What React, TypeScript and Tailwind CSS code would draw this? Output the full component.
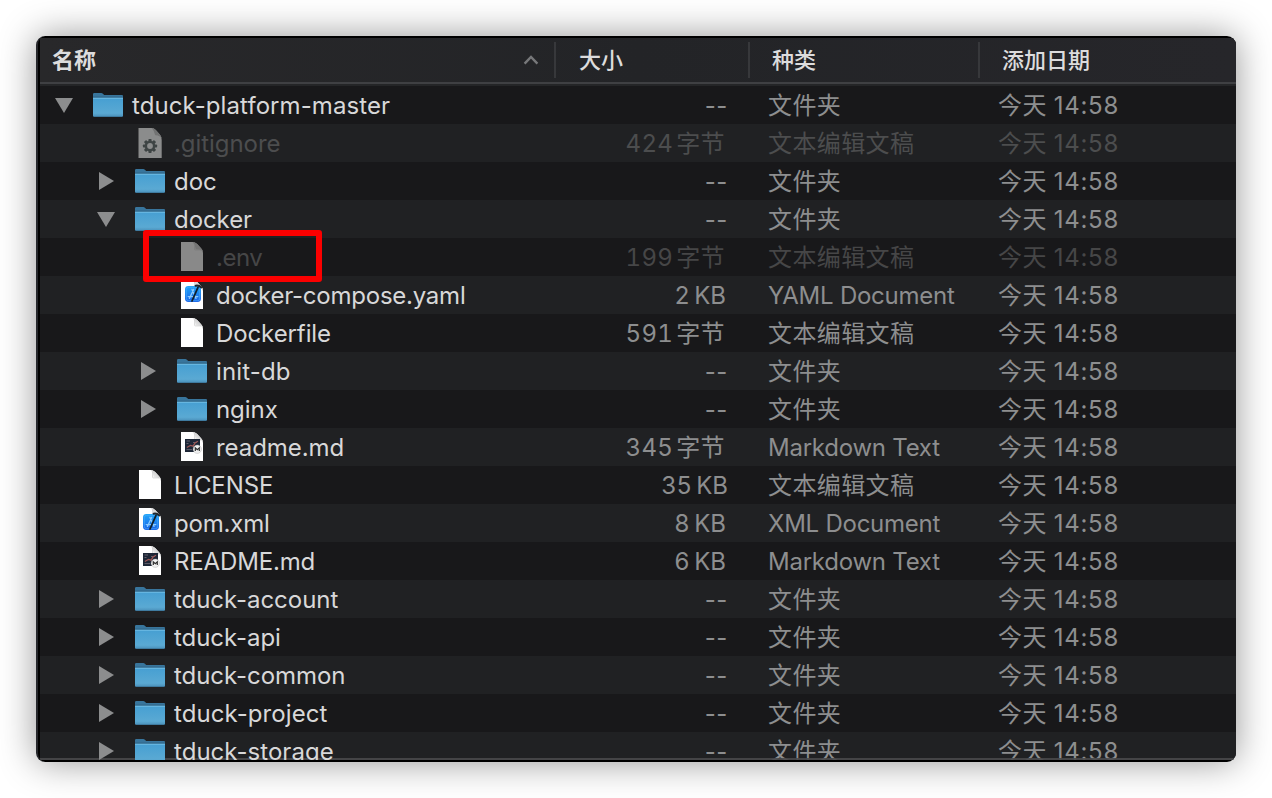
type IconKind = 'folder' | 'plain' | 'gear' | 'xcode' | 'markdown';

interface Entry {
  name: string;
  depth: number;
  icon: IconKind;
  open?: boolean;
  size?: [string, string];
  kind: string;
  dim?: boolean;
  marked?: boolean;
  tracking?: string;
}

const FOLDER = '文件夹';
const TEXT = '文本编辑文稿';

const entries: Entry[] = [
  { name: 'tduck-platform-master', depth: 0, icon: 'folder', open: true, kind: FOLDER, tracking: 'tracking-[0.08px]' },
  { name: '.gitignore', depth: 1, icon: 'gear', size: ['424', '字节'], kind: TEXT, dim: true },
  { name: 'doc', depth: 1, icon: 'folder', kind: FOLDER },
  { name: 'docker', depth: 1, icon: 'folder', open: true, kind: FOLDER },
  { name: '.env', depth: 2, icon: 'plain', size: ['199', '字节'], kind: TEXT, dim: true, marked: true, tracking: 'tracking-[-0.5px]' },
  { name: 'docker-compose.yaml', depth: 2, icon: 'xcode', size: ['2', 'KB'], kind: 'YAML Document', tracking: 'tracking-[-0.24px]' },
  { name: 'Dockerfile', depth: 2, icon: 'plain', size: ['591', '字节'], kind: TEXT, tracking: 'tracking-[-0.1px]' },
  { name: 'init-db', depth: 2, icon: 'folder', kind: FOLDER, tracking: 'tracking-[0.15px]' },
  { name: 'nginx', depth: 2, icon: 'folder', kind: FOLDER },
  { name: 'readme.md', depth: 2, icon: 'markdown', size: ['345', '字节'], kind: 'Markdown Text' },
  { name: 'LICENSE', depth: 1, icon: 'plain', size: ['35', 'KB'], kind: TEXT },
  { name: 'pom.xml', depth: 1, icon: 'xcode', size: ['8', 'KB'], kind: 'XML Document', tracking: 'tracking-[-0.2px]' },
  { name: 'README.md', depth: 1, icon: 'markdown', size: ['6', 'KB'], kind: 'Markdown Text', tracking: 'tracking-[-0.15px]' },
  { name: 'tduck-account', depth: 1, icon: 'folder', kind: FOLDER, tracking: 'tracking-[-0.05px]' },
  { name: 'tduck-api', depth: 1, icon: 'folder', kind: FOLDER },
  { name: 'tduck-common', depth: 1, icon: 'folder', kind: FOLDER },
  { name: 'tduck-project', depth: 1, icon: 'folder', kind: FOLDER, tracking: 'tracking-[0.08px]' },
  { name: 'tduck-storage', depth: 1, icon: 'folder', kind: FOLDER, tracking: 'tracking-[0.04px]' },
];

const indents = ['pl-[14px]', 'pl-[56px]', 'pl-[98px]'];

function Gradients() {
  return (
    <svg width="0" height="0" className="absolute">
      <defs>
        <linearGradient id="folderFront" x1="0" y1="0" x2="0" y2="1">
          <stop offset="0" stopColor="#469fd2" />
          <stop offset="0.8" stopColor="#5aa9d3" />
          <stop offset="1" stopColor="#4a8fb8" />
        </linearGradient>
        <linearGradient id="appBlue" x1="0" y1="0" x2="0" y2="1">
          <stop offset="0" stopColor="#1fa5f8" />
          <stop offset="1" stopColor="#1a63e8" />
        </linearGradient>
        <linearGradient id="pageFold" x1="0" y1="1" x2="1" y2="0">
          <stop offset="0" stopColor="#ffffff" />
          <stop offset="1" stopColor="#b8b8b8" />
        </linearGradient>
      </defs>
    </svg>
  );
}

function FolderIcon() {
  return (
    <svg width="30" height="24" viewBox="0 0 30 24">
      <path d="M0 1.2Q0 0 1.2 0H8.3Q9.2 0 9.9 0.7L11.2 2H29Q30 2 30 3V8H0Z" fill="#38759c" />
      <path d="M0 3.8H30V5H0Z" fill="#2b5874" />
      <path d="M0 4.8H30V22.6Q30 24 28.6 24H1.4Q0 24 0 22.6Z" fill="url(#folderFront)" />
      <path d="M0 4.8H30V5.8H0Z" fill="#6fbce4" />
      <path d="M0.4 22.9H29.6Q29.3 24 28.6 24H1.4Q0.7 24 0.4 22.9Z" fill="#3f7ba0" />
    </svg>
  );
}

function DocumentIcon({ kind, dim }: { kind: IconKind; dim?: boolean }) {
  if (kind === 'gear') {
    return (
      <svg width="24" height="30" viewBox="0 0 24 30">
        <path d="M0.5 0H13.5C16 0 18 2 20 4.5C22.5 7 23.7 9 23.7 12V30H0.5Z" fill="#8b8c8c" />
        <path d="M13.5 0C16 0 18 2 20 4.5C22.5 7 23.7 9 23.7 10.5C22 7.6 19 7.4 17.6 7.2C16.4 7 16.8 3 13.5 0Z" fill="#727373" />
        <g fill="#3e4444">
          {[0, 45, 90, 135].map((a) => (
            <rect key={a} x="10.4" y="10.9" width="3.2" height="14.2" rx="0.8" transform={`rotate(${a} 12 18)`} />
          ))}
          <circle cx="12" cy="18" r="5.2" />
        </g>
        <circle cx="12" cy="18" r="2.9" fill="#8b8c8c" />
      </svg>
    );
  }
  return (
    <svg width="22" height="29" viewBox="0 0 22 29">
      <path d="M0 0H11.5C14 0 15.5 1.2 17.8 3.8C20.6 6.6 22 8.4 22 11V29H0Z" fill={dim ? '#898989' : '#ffffff'} />
      <path
        d="M11.5 0C14 0 15.5 1.2 17.8 3.8C20.6 6.6 22 8.4 22 10.2C20.5 7.6 17.5 7.4 15 7.3C14.2 7.2 14.8 3 11.5 0Z"
        fill={dim ? '#747474' : 'url(#pageFold)'}
      />
      <path d="M13.6 1.8V7.2Q13.6 7.9 14.3 7.9H20" fill="none" stroke={dim ? '#7a7a7a' : '#c9c9c9'} strokeWidth="0.7" />
      {kind === 'xcode' && (
        <g>
          <rect x="4" y="6" width="16" height="16" rx="3.4" fill="url(#appBlue)" />
          <rect x="5.3" y="7.3" width="13.4" height="13.4" rx="2.3" fill="none" stroke="#4fb0fa" strokeWidth="0.6" />
          <path d="M7.2 16.6H16.8M11 9.4L15 18.4M12.6 9.4L8.4 18.4" stroke="#8ccbff" strokeWidth="1.3" strokeLinecap="round" fill="none" />
          <path d="M17 7.4L11 21" stroke="#10202c" strokeWidth="1.8" strokeLinecap="round" />
          <path d="M14.6 5.8Q17.6 5 20.4 7.4" stroke="#20262c" strokeWidth="2" strokeLinecap="round" fill="none" />
        </g>
      )}
      {kind === 'markdown' && (
        <g>
          <rect x="4" y="7" width="15" height="13" fill="#1d2636" />
          <path d="M5.5 9H9M5.5 11.5H7.5M12 10.5H16M5.5 17.6H11" stroke="#75707c" strokeWidth="0.8" />
          <path d="M5.8 15.5L9.5 13.5L12 14.2L14.2 10.8L17 9.2" stroke="#9c5654" strokeWidth="1.2" fill="none" />
          <circle cx="16.3" cy="17.2" r="4.2" fill="#f1f1f1" stroke="#a9a9a9" strokeWidth="0.4" />
          <path d="M14.3 19V15.8L16.3 17.6L18.3 15.8V19" stroke="#303030" strokeWidth="1.2" fill="none" />
        </g>
      )}
    </svg>
  );
}

function Disclosure({ open }: { open?: boolean }) {
  return (
    <svg width="20" height="20" viewBox="0 0 20 20">
      <path d={open ? 'M1 3H19L10 18Z' : 'M3 1V19L18 10Z'} fill="#8c8d8e" />
    </svg>
  );
}

function HeaderCell({ label, className }: { label: string; className: string }) {
  return (
    <div className={`flex h-[36px] items-center border-l-2 border-[#37383b] ${className}`}>
      <span className="pb-px">{label}</span>
    </div>
  );
}

function SizeText({ size }: { size?: [string, string] }) {
  if (!size) {
    return <span className="tracking-[0.6px]">--</span>;
  }
  const [amount, unit] = size;
  if (unit === 'KB') {
    return (
      <>
        <span className="tracking-[0.8px]">{amount}</span>
        <span className={amount.length > 1 ? 'pl-[4px]' : 'pr-[2px] pl-[4px]'}>{unit}</span>
      </>
    );
  }
  return (
    <>
      <span className="tracking-[0.3px] tabular-nums">{amount}</span>
      <span className="pr-[3px] pl-[3px] tracking-[0.4px]">{unit}</span>
    </>
  );
}

function Row({ entry, striped }: { entry: Entry; striped: boolean }) {
  const isFolder = entry.icon === 'folder';
  const dimColor = striped ? 'text-[#4c4d4e]' : 'text-[#464647]';
  const nameColor = entry.dim ? dimColor : 'text-[#d8d8d9]';
  const metaColor = entry.dim ? dimColor : 'text-[#8d8e8f]';
  const latin = /^[A-Z]/.test(entry.kind);
  return (
    <div className={`flex h-[38px] shrink-0 items-center ${striped ? 'bg-[#202123]' : 'bg-[#18181a]'}`}>
      <div className={`relative flex h-full w-[520px] items-center ${indents[entry.depth]} ${nameColor}`}>
        <div className="w-[36px]">{isFolder && <Disclosure open={entry.open} />}</div>
        <div className={`flex w-[36px] justify-center ${isFolder ? '' : 'pb-[1px]'}`}>
          {isFolder ? <FolderIcon /> : <DocumentIcon kind={entry.icon} dim={entry.dim} />}
        </div>
        <span className={`pt-[2px] pl-[6px] ${entry.tracking ?? 'tracking-[-0.06px]'}`}>{entry.name}</span>
        {entry.marked && (
          <div className="absolute -top-[8px] left-[103px] z-10 h-[52px] w-[179px] rounded-[3px] border-[6px] border-[#fb0000]" />
        )}
      </div>
      <div className={`flex w-[168px] items-center justify-end pt-[2px] ${metaColor}`}>
        <SizeText size={entry.size} />
      </div>
      <div className={`w-[270px] pt-[2px] pl-[40px] ${metaColor} ${latin ? 'tracking-[-0.24px]' : 'tracking-[0.4px]'}`}>
        {entry.kind}
      </div>
      <div className={`flex pt-[2px] ${metaColor}`}>
        <span className="tracking-[0.4px]">今天</span>
        <span className="pl-[7px] tracking-[0.7px]">14:58</span>
      </div>
    </div>
  );
}

export default function App() {
  return (
    <div className="h-[798px] w-[1272px] overflow-hidden bg-white p-[36px] font-['Inter','Noto_Sans_CJK_SC',sans-serif]">
      <Gradients />
      <div className="h-[726px] w-[1200px] rounded-[9px] shadow-[0_0_36px_rgba(0,0,0,0.42)]">
        <div className="flex h-full flex-col overflow-hidden rounded-[9px] border-l-2 border-[#26272b] bg-black py-[2px] pl-[2px]">
          <div className="flex h-[48px] shrink-0 flex-col bg-[#242527]">
            <div className="flex h-[44px] items-center bg-linear-to-r from-[#28282a] via-[#232427] to-[#26262a] text-[22px] leading-none text-[#dcdcdd]">
              <div className="flex w-[514px] items-center justify-between pr-[15px] pl-[12px]">
                <span className="pb-px font-bold">名称</span>
                <svg width="16" height="12" viewBox="0 0 16 12">
                  <path d="M1.6 9.6L8 3L14.4 9.6" fill="none" stroke="#77787a" strokeWidth="2.4" />
                </svg>
              </div>
              <HeaderCell label="大小" className="w-[194px] pl-[23px] font-medium" />
              <HeaderCell label="种类" className="w-[230px] pl-[22px] font-medium" />
              <HeaderCell label="添加日期" className="flex-1 pl-[22px] font-medium" />
            </div>
            <div className="h-[2px] bg-[#3f4043]" />
          </div>
          <div className="flex h-[674px] flex-col overflow-hidden text-[24px] leading-[36px] whitespace-nowrap">
            {entries.map((entry, i) => (
              <Row key={entry.name} entry={entry} striped={i % 2 === 1} />
            ))}
          </div>
          <div className="-mt-[2px] h-[2px] shrink-0 bg-[#48484a]/90" />
        </div>
      </div>
    </div>
  );
}
